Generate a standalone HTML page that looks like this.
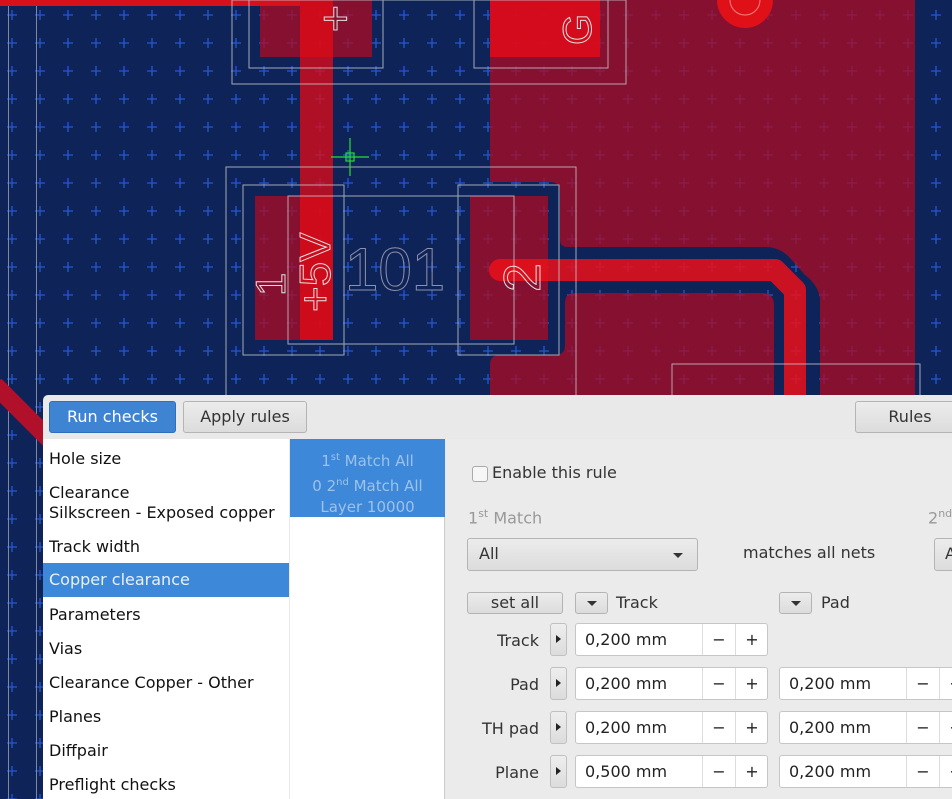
<!DOCTYPE html>
<html><head><meta charset="utf-8"><style>
*{margin:0;padding:0;box-sizing:border-box}
body{width:952px;height:799px;overflow:hidden;position:relative;background:#0e2458;font-family:"DejaVu Sans","Liberation Sans",sans-serif;font-size:16px;color:#222}
svg.pcb{position:absolute;left:0;top:0}
.dlg{position:absolute;left:43px;top:395px;width:909px;height:404px;background:#e9e9e9;border-top-left-radius:5px}
.btn{position:absolute;height:32px;border:1px solid #b4b4b4;border-radius:3px;background:linear-gradient(#ececec,#dcdcdc);line-height:30px;text-align:center;color:#333;font-size:16px}
.list{position:absolute;left:0;top:44px;width:246px;height:360px;background:#fff}
.list div{position:absolute;left:0;width:246px;padding-left:6px;line-height:20px;color:#111}
.mid{position:absolute;left:247px;top:44px;width:155px;height:360px;background:#fff;border-right:1px solid #ccc}
.right{position:absolute;left:403px;top:44px;width:506px;height:360px;background:#ebebeb}
.ab{position:absolute}
.inp{position:absolute;height:33px;background:#fff;border:1px solid #c6c6c6;border-radius:3px;font-size:16px;line-height:31px}
.inp span{position:absolute;top:0}
.arrow{position:absolute;width:17px;height:33px;border:1px solid #c0c0c0;border-radius:3px;background:linear-gradient(#eee,#dcdcdc)}
.arrow:after{content:"";position:absolute;left:5px;top:11px;border-left:5px solid #222;border-top:4px solid transparent;border-bottom:4px solid transparent}
.lbl{position:absolute;text-align:right;width:90px;color:#333}
</style></head><body>
<svg class="pcb" width="952" height="799" viewBox="0 0 952 799">
<defs><pattern id="g" width="28" height="28" patternUnits="userSpaceOnUse" x="-2" y="1">
<path d="M14 9v10M9 14h10" stroke="#2358d0" stroke-width="1.3"/></pattern></defs>
<rect width="952" height="799" fill="#0e2458"/>
<rect width="952" height="799" fill="url(#g)"/>
<line x1="8.5" y1="0" x2="8.5" y2="799" stroke="#8088a0" stroke-width="1"/>
<line x1="36.5" y1="0" x2="36.5" y2="799" stroke="#8088a0" stroke-width="1"/>
<g fill="rgba(175,10,35,0.75)">
<path d="M490 0H915V395H820V298Q818 285 805 275L790 258Q780 247 765 247H568Q560 247 560 240V192Q560 182 550 182H490Z"/>
<path d="M575 293H762Q774 293 774 305V395H490V365Q490 355 500 355H555Q565 355 565 345V303Q565 293 575 293Z"/>
<rect x="260" y="0" width="112" height="57"/>
<rect x="255" y="196" width="78" height="144"/>
<rect x="470" y="196" width="78" height="144"/>
</g>
<rect x="490" y="0" width="110" height="57" fill="rgba(230,10,25,0.8)"/>
<rect x="300" y="0" width="33" height="340" fill="rgba(230,10,20,0.75)"/>
<rect x="0" y="0" width="300" height="6" fill="#d8101c"/>
<path d="M500 270H775L795 290V395" stroke="rgba(235,15,25,0.85)" stroke-width="22" fill="none" stroke-linejoin="round" stroke-linecap="round"/>
<circle cx="745" cy="0" r="28" fill="#e01018"/>
<circle cx="745" cy="0" r="15" fill="none" stroke="#ff8080" stroke-width="1"/>
<path d="M-5 385L50 440" stroke="#b0102a" stroke-width="18"/>
<g fill="none" stroke="#c8c8d0" stroke-width="1" opacity="0.8">
<rect x="232" y="0" width="394" height="84"/>
<rect x="249" y="0" width="134" height="68"/>
<rect x="474" y="0" width="134" height="68"/>
<rect x="226" y="167" width="350" height="342"/>
<rect x="243" y="185" width="101" height="170"/>
<rect x="458" y="185" width="101" height="170"/>
<rect x="288" y="196" width="226" height="148"/>
<rect x="672" y="364" width="248" height="40"/>
</g>
<g stroke="#22e030" stroke-width="1.2" fill="none"><path d="M331 157H369M350 138V176"/><rect x="346" y="153" width="8" height="8"/></g>
<g font-family="Liberation Sans,sans-serif" font-weight="normal" fill="none" stroke="#e0e0e0" stroke-width="1">
<text transform="translate(285,296) rotate(-90)" font-size="42">1</text>
<text transform="translate(330,312) rotate(-90)" font-size="44">+5V</text>
<text x="345" y="290" font-size="60" stroke="#9090a8">101</text>
<text transform="translate(540,292) rotate(-90)" font-size="52">2</text>
<text transform="translate(591,45) rotate(-90)" font-size="40">G</text>
<text x="322" y="34" font-size="46">+</text>
</g>
</svg>

<div class="dlg">
<div class="btn" style="left:6px;top:6px;width:127px;background:#3f83d3;border-color:#2f6fbf;color:#fff">Run checks</div>
<div class="btn" style="left:140px;top:6px;width:124px">Apply rules</div>
<div class="btn" style="left:812px;top:6px;width:110px">Rules</div>
<div class="list">
<div style="top:10px">Hole size</div>
<div style="top:44px">Clearance</div>
<div style="top:64px">Silkscreen - Exposed copper</div>
<div style="top:98px">Track width</div>
<div style="top:124px;height:34px;background:#3d88d8;color:#e8f0fa;line-height:34px">Copper clearance</div>
<div style="top:166px">Parameters</div>
<div style="top:200px">Vias</div>
<div style="top:234px">Clearance Copper - Other</div>
<div style="top:268px">Planes</div>
<div style="top:302px">Diffpair</div>
<div style="top:336px">Preflight checks</div>
</div>
<div class="mid"><div style="position:absolute;left:0;top:0;width:155px;height:78px;background:#3d88d8;color:#9cc2ea;text-align:center;font-size:15px;line-height:21px;padding-top:8px">1<sup style="font-size:10px">st</sup> Match All<br>0 2<sup style="font-size:10px">nd</sup> Match All<br>Layer 10000</div></div>
<div class="right">
<div class="ab" style="left:26px;top:27px;width:16px;height:16px;border:1px solid #aaa;border-radius:3px;background:#f6f6f6"></div>
<div class="ab" style="left:46px;top:24px;color:#333">Enable this rule</div>
<div class="ab" style="left:22px;top:68px;color:#999">1<sup style="font-size:11px">st</sup> Match</div>
<div class="ab" style="left:482px;top:68px;color:#999">2<sup style="font-size:11px">nd</sup></div>
<div class="btn" style="left:21px;top:99px;width:231px;height:33px;text-align:left;padding-left:11px">All<span style="position:absolute;right:14px;top:14px;border-top:5px solid #333;border-left:5px solid transparent;border-right:5px solid transparent"></span></div>
<div class="ab" style="left:297px;top:104px;color:#333">matches all nets</div>
<div class="btn" style="left:488px;top:99px;width:40px;height:33px;text-align:left;padding-left:10px">Al</div>
<div class="btn" style="left:21px;top:153px;width:96px;height:22px;line-height:20px">set all</div>
<div class="btn" style="left:129px;top:153px;width:33px;height:22px"><span style="position:absolute;left:11px;top:8px;border-top:5px solid #333;border-left:5px solid transparent;border-right:5px solid transparent"></span></div>
<div class="ab" style="left:170px;top:154px;color:#333">Track</div>
<div class="btn" style="left:333px;top:153px;width:33px;height:22px"><span style="position:absolute;left:11px;top:8px;border-top:5px solid #333;border-left:5px solid transparent;border-right:5px solid transparent"></span></div>
<div class="ab" style="left:375px;top:154px;color:#333">Pad</div>

<div class="lbl" style="left:3px;top:192px">Track</div><div class="arrow" style="left:104px;top:184px"></div>
<div class="inp" style="left:129px;top:184px;width:193px"><span style="left:9px">0,200 mm</span><span style="left:126px;border-left:1px solid #ddd;height:31px;width:33px;text-align:center">−</span><span style="left:159px;border-left:1px solid #ddd;height:31px;width:33px;text-align:center">+</span></div>

<div class="lbl" style="left:3px;top:236px">Pad</div><div class="arrow" style="left:104px;top:228px"></div>
<div class="inp" style="left:129px;top:228px;width:193px"><span style="left:9px">0,200 mm</span><span style="left:126px;border-left:1px solid #ddd;height:31px;width:33px;text-align:center">−</span><span style="left:159px;border-left:1px solid #ddd;height:31px;width:33px;text-align:center">+</span></div>
<div class="inp" style="left:333px;top:228px;width:200px"><span style="left:9px">0,200 mm</span><span style="left:126px;border-left:1px solid #ddd;height:31px;width:33px;text-align:center">−</span><span style="left:159px;border-left:1px solid #ddd;height:31px;width:33px;text-align:center">+</span></div>

<div class="lbl" style="left:3px;top:280px">TH pad</div><div class="arrow" style="left:104px;top:272px"></div>
<div class="inp" style="left:129px;top:272px;width:193px"><span style="left:9px">0,200 mm</span><span style="left:126px;border-left:1px solid #ddd;height:31px;width:33px;text-align:center">−</span><span style="left:159px;border-left:1px solid #ddd;height:31px;width:33px;text-align:center">+</span></div>
<div class="inp" style="left:333px;top:272px;width:200px"><span style="left:9px">0,200 mm</span><span style="left:126px;border-left:1px solid #ddd;height:31px;width:33px;text-align:center">−</span><span style="left:159px;border-left:1px solid #ddd;height:31px;width:33px;text-align:center">+</span></div>

<div class="lbl" style="left:3px;top:324px">Plane</div><div class="arrow" style="left:104px;top:316px"></div>
<div class="inp" style="left:129px;top:316px;width:193px"><span style="left:9px">0,500 mm</span><span style="left:126px;border-left:1px solid #ddd;height:31px;width:33px;text-align:center">−</span><span style="left:159px;border-left:1px solid #ddd;height:31px;width:33px;text-align:center">+</span></div>
<div class="inp" style="left:333px;top:316px;width:200px"><span style="left:9px">0,200 mm</span><span style="left:126px;border-left:1px solid #ddd;height:31px;width:33px;text-align:center">−</span><span style="left:159px;border-left:1px solid #ddd;height:31px;width:33px;text-align:center">+</span></div>
</div>
</div>
</body></html>
